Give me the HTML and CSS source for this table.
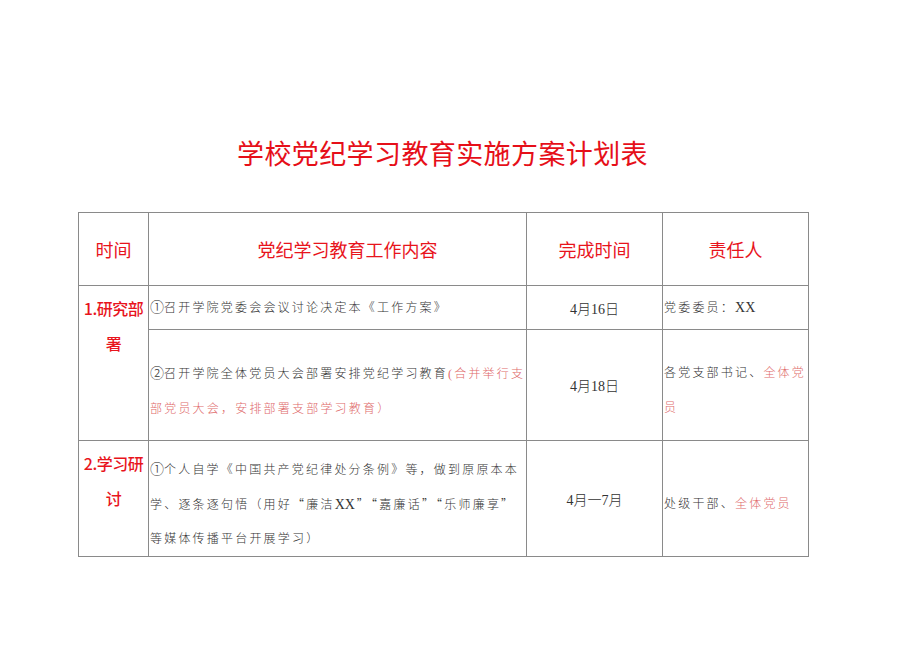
FILE: index.html
```html
<!DOCTYPE html>
<html lang="zh-CN">
<head>
<meta charset="utf-8">
<title>学校党纪学习教育实施方案计划表</title>
<link rel="stylesheet" href="styles.css">
</head>
<body>
<div class="page">
  <h1 class="title">学校党纪学习教育实施方案计划表</h1>
  <table class="plan">
    <colgroup>
      <col class="c1"><col class="c2"><col class="c3"><col class="c4">
    </colgroup>
    <tr class="head">
      <th>时间</th>
      <th class="wide">党纪学习教育工作内容</th>
      <th>完成时间</th>
      <th>责任人</th>
    </tr>
    <tr class="r1a">
      <td class="stage" rowspan="2">1.研究部<br>署</td>
      <td class="txt"><span class="num">①</span>召开学院党委会会议讨论决定本《工作方案》</td>
      <td class="date">4月16日</td>
      <td class="txt">党委委员：<span class="xx">XX</span></td>
    </tr>
    <tr class="r1b">
      <td class="txt multi"><span class="num">②</span>召开学院全体党员大会部署安排党纪学习教育<span class="pink">(合并举行支<br>部党员大会，安排部署支部学习教育）</span></td>
      <td class="date">4月18日</td>
      <td class="txt multi">各党支部书记、<span class="pink">全体党<br>员</span></td>
    </tr>
    <tr class="r2">
      <td class="stage">2.学习研<br>讨</td>
      <td class="txt multi"><span class="num">①</span>个人自学《中国共产党纪律处分条例》等，做到原原本本<br>学、逐条逐句悟（用好<span class="q">“</span>廉洁<span class="xx">XX</span><span class="q">”“</span>嘉廉话<span class="q">”“</span>乐师廉享<span class="q">”</span><br>等媒体传播平台开展学习）</td>
      <td class="date">4月一7月</td>
      <td class="txt multi">处级干部、<span class="pink">全体党员</span></td>
    </tr>
  </table>
</div>
</body>
</html>
```
FILE: styles.css
```css
html, body {
  margin: 0;
  padding: 0;
  background: #ffffff;
}
.page {
  width: 920px;
  height: 651px;
  padding-top: 133px;
  box-sizing: border-box;
  display: flex;
  flex-direction: column;
  align-items: flex-start;
}
.title {
  margin: 0 0 0 237px;
  font-family: "Noto Sans CJK SC", sans-serif;
  font-weight: 400;
  font-size: 27px;
  line-height: 40px;
  color: #e60f19;
  letter-spacing: 0.4px;
}
.plan {
  margin: 39px 0 0 78px;
  border-collapse: collapse;
  table-layout: fixed;
  width: 730px;
}
.c1 { width: 70px; }
.c2 { width: 378px; }
.c3 { width: 136px; }
.c4 { width: 146px; }
.plan th, .plan td {
  border: 1px solid #8a8a8a;
  padding: 0;
}
.head th {
  height: 72px;
  font-family: "Noto Sans CJK SC", sans-serif;
  font-weight: 400;
  font-size: 18px;
  color: #e8141c;
  text-align: center;
  vertical-align: middle;
}
.head th.wide { padding-left: 20px; }
.r1a td { height: 43px; }
.r1b td { height: 110px; }
.r2 td { height: 112px; }
.stage {
  vertical-align: top;
  text-align: center;
  font-family: "Noto Sans CJK SC", sans-serif;
  font-weight: 500;
  font-size: 16px;
  line-height: 35px;
  color: #e8141c;
  padding-top: 5px !important;
  letter-spacing: -0.5px;
}
.r2 td.stage { height: 107px; }
.txt {
  font-family: "Liberation Serif", "Noto Sans CJK SC", serif;
  font-weight: 300;
  font-size: 12px;
  letter-spacing: 2.2px;
  color: #333333;
  line-height: 35px;
  vertical-align: middle;
  text-align: left;
  padding-left: 1px !important;
  white-space: nowrap;
}
.r1b td.multi {
  height: 98px;
  padding-top: 12px !important;
}
.r2 td.multi {
  height: 102px;
  padding-top: 10px !important;
  line-height: 34px;
}
.num {
  font-family: "Noto Sans CJK SC", sans-serif;
  font-weight: 300;
  font-size: 14px;
  letter-spacing: 0;
}
.xx {
  font-family: "Liberation Serif", serif;
  font-weight: 400;
  letter-spacing: 0;
  font-size: 14px;
  margin-right: 2px;
}
.q {
  font-family: "Noto Sans CJK SC", sans-serif;
}
.date {
  font-family: "Liberation Serif", "Noto Sans CJK SC", serif;
  font-weight: 300;
  font-size: 14px;
  color: #333333;
  text-align: center;
  vertical-align: middle;
}
.pink {
  color: #e06a6a;
}
```
